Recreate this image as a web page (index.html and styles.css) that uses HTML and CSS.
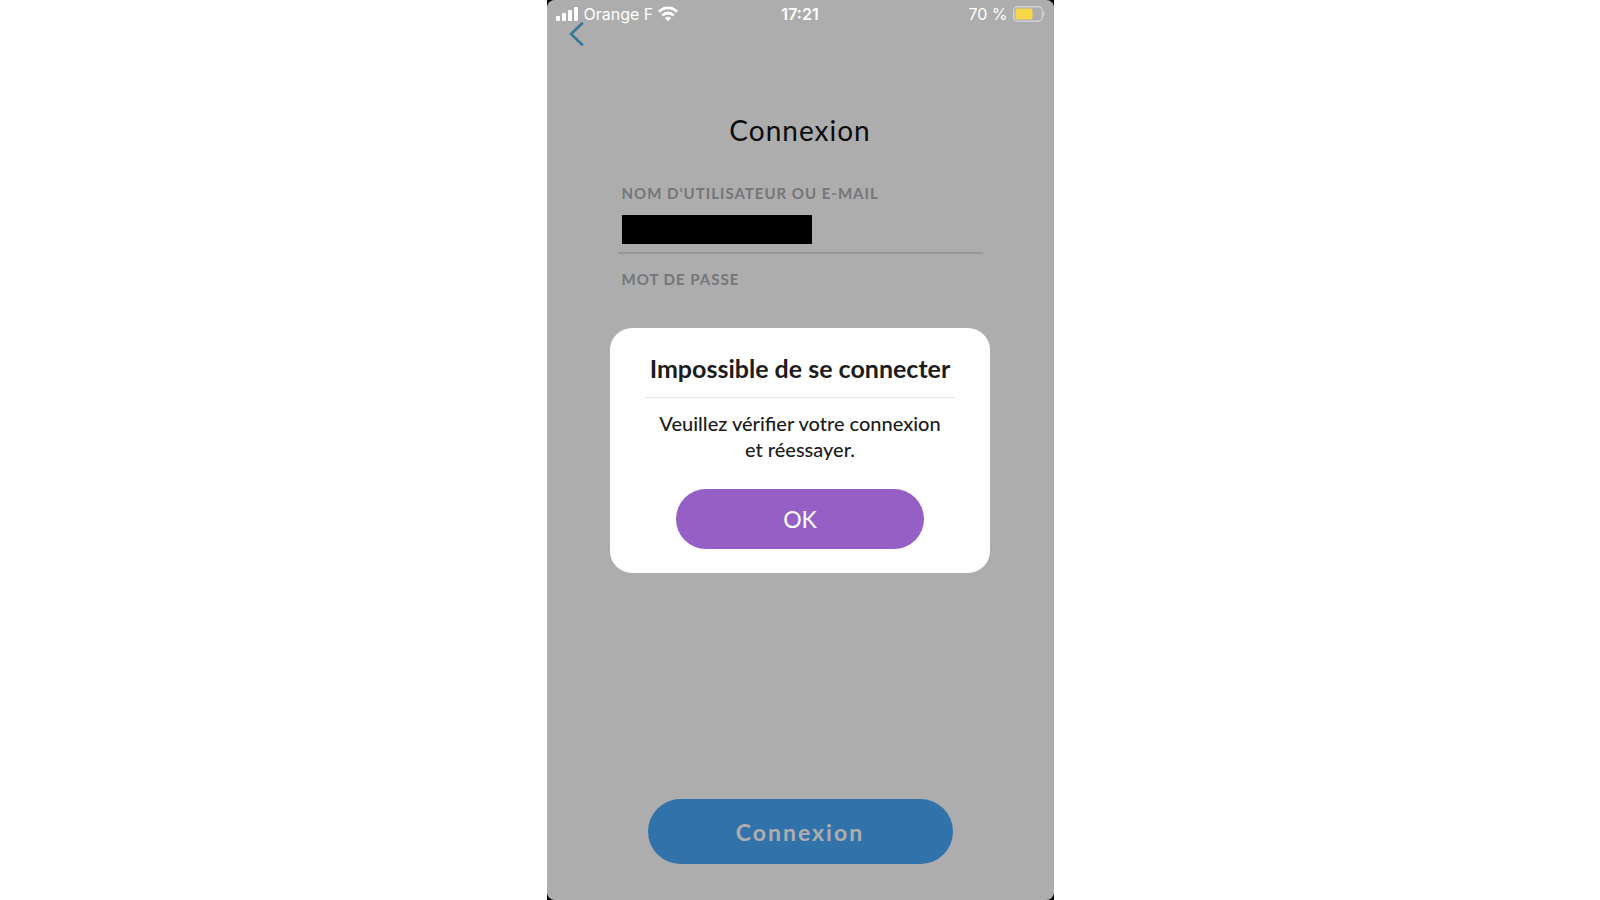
FILE: index.html
```html
<!DOCTYPE html>
<html lang="fr">
  <head>
    <meta charset="UTF-8" />
    <meta name="viewport" content="width=device-width, initial-scale=1.0" />
    <title>Connexion</title>
    <link rel="stylesheet" href="styles.css">
  </head>
  <body>
    <div class="device">
      <div class="screen">
        <header class="status-bar">
          <div class="carrier">
            <svg width="23" height="15" viewBox="0 0 23 15" fill="#fff" aria-hidden="true">
              <rect x="0" y="9" width="4" height="5" rx="1" />
              <rect x="6" y="6" width="4" height="8" rx="1" />
              <rect x="12" y="3" width="4" height="11" rx="1" />
              <rect x="18" y="0" width="4" height="14" rx="1" />
            </svg>
            <span>Orange F</span>
            <svg width="20" height="16" viewBox="0 0 20 16" fill="none" stroke="#fff" stroke-width="2.8" aria-hidden="true">
              <path d="M1 5.8C6 .6 14 .6 19 5.8" />
              <path d="M4.4 9.4c3.2-3.2 8-3.2 11.2 0" />
              <path d="M10 15.2l-3.2-3.3c1.8-1.7 4.6-1.7 6.4 0z" fill="#fff" stroke="none" />
            </svg>
          </div>
          <span class="clock">17:21</span>
          <div class="battery">
            <span>70 %</span>
            <svg width="32" height="16" viewBox="0 0 32 16" fill="none" aria-hidden="true">
              <rect x=".7" y=".7" width="28.6" height="14.6" rx="4" stroke="#d2d2d2" stroke-width="1.4" />
              <rect x="2.5" y="2.5" width="17" height="11" rx="2" fill="#f8d748" />
              <path d="M30.4 5.5c2 .8 2 4.2 0 5z" fill="#d2d2d2" />
            </svg>
          </div>
        </header>

        <nav class="nav">
          <button type="button" class="back-button" aria-label="Retour">
            <svg width="16" height="24" viewBox="0 0 16 24" fill="none" stroke="#52b0e4" stroke-width="2.6" stroke-linecap="round" stroke-linejoin="round" aria-hidden="true">
              <path d="M13 1.5L2 12l11 10.5" />
            </svg>
          </button>
        </nav>

        <form class="login-form">
          <h1 class="login-title">Connexion</h1>
          <div class="field">
            <label for="username">NOM D'UTILISATEUR OU E-MAIL</label>
            <input type="text" id="username" class="masked" autocomplete="off" />
          </div>
          <div class="field">
            <label for="password">MOT DE PASSE</label>
            <input type="password" id="password" />
          </div>
          <button type="submit" class="login-button">Connexion</button>
        </form>

        <div class="overlay">
          <div class="modal" role="alertdialog" aria-labelledby="modal-title" aria-describedby="modal-text">
            <h2 id="modal-title">Impossible de se connecter</h2>
            <p id="modal-text">Veuillez vérifier votre connexion<br />et réessayer.</p>
            <button type="button" class="ok-button">OK</button>
          </div>
        </div>
      </div>
    </div>
  </body>
</html>
```
FILE: styles.css
```css
* {
  margin: 0;
  padding: 0;
  box-sizing: border-box;
}

body {
  font-family: Lato, "Open Sans", sans-serif;
  background: white;
}

button {
  border: none;
  font-family: inherit;
  cursor: pointer;
}

.device {
  width: 100%;
  max-width: 507px;
  min-height: 100vh;
  margin: 0 auto;
  background: black;
  display: flex;
}

.screen {
  flex: 1;
  position: relative;
  display: flex;
  flex-direction: column;
  background: white;
  border-radius: 8px;
  overflow: hidden;
}

/* stays bright above the dimmed page */
.status-bar {
  position: relative;
  z-index: 2;
  height: 22px;
  padding: 6px 9px 0;
  display: grid;
  grid-template-columns: 1fr auto 1fr;
  align-items: center;
  color: white;
  font-family: Inter, sans-serif;
  font-size: 16px;
  line-height: 16px;
}

.carrier,
.battery {
  display: flex;
  align-items: center;
  gap: 5px;
}

.battery {
  justify-content: flex-end;
}

.clock {
  font-weight: 600;
}

.nav {
  padding: 0 22px;
}

.back-button {
  display: block;
  background: none;
}

.back-button svg {
  display: block;
}

.login-form {
  flex: 1;
  display: flex;
  flex-direction: column;
  padding: 66px 71px 36px;
  color: #111;
}

.login-title {
  margin-bottom: 35px;
  font-size: 28px;
  font-weight: 400;
  line-height: 36px;
  letter-spacing: 1px;
  text-align: center;
}

.field {
  padding: 0 4px 8px;
  margin-bottom: 15px;
  border-bottom: 2px solid #e1e1e1;
}

.field label {
  display: block;
  margin-bottom: 12px;
  color: #acaeb3;
  font-size: 15px;
  font-weight: 700;
  line-height: 20px;
  letter-spacing: 1px;
}

.field input {
  display: block;
  width: 100%;
  height: 29px;
  border: none;
  outline: none;
  font-size: 20px;
}

.field .masked {
  width: 190px;
  background: black;
}

.login-button {
  align-self: center;
  width: 305px;
  max-width: 100%;
  height: 65px;
  margin-top: auto;
  border-radius: 33px;
  background: #4ba9fb;
  color: white;
  font-size: 23px;
  font-weight: 700;
  letter-spacing: 2px;
}

.overlay {
  position: absolute;
  inset: 0;
  display: flex;
  align-items: center;
  justify-content: center;
  background: rgba(0, 0, 0, 0.32);
}

.modal {
  width: 75%;
  padding: 24px 35px;
  border-radius: 22px;
  background: white;
  color: #1c1c1c;
  text-align: center;
}

.modal h2 {
  padding-bottom: 12px;
  margin-bottom: 12px;
  border-bottom: 1px solid #e6e6e6;
  font-size: 25px;
  font-weight: 700;
  line-height: 33px;
  white-space: nowrap;
}

.modal p {
  margin-bottom: 27px;
  font-size: 20px;
  font-weight: 500;
  line-height: 26px;
}

.ok-button {
  width: 248px;
  max-width: 100%;
  height: 60px;
  border-radius: 30px;
  background: #965fc5;
  color: white;
  font-size: 23px;
}
```
